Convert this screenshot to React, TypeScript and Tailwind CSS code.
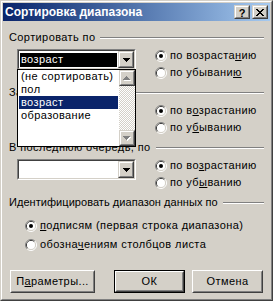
import React from "react";

const F = "font-['Liberation_Sans',Arial,sans-serif] tracking-[0.4px]";

function Raised({ className = "", children }: { className?: string; children?: React.ReactNode }) {
  return (
    <div className={`border border-t-[#d4d0c8] border-l-[#d4d0c8] border-r-[#404040] border-b-[#404040] ${className}`}>
      <div className="w-full h-full border border-t-white border-l-white border-r-[#808080] border-b-[#808080] bg-[#d4d0c8] flex items-center justify-center">
        {children}
      </div>
    </div>
  );
}

function PushButton({ className = "", children, def = false }: { className?: string; children?: React.ReactNode; def?: boolean }) {
  const inner = (
    <div className="w-full h-full border border-t-white border-l-white border-r-[#404040] border-b-[#404040]">
      <div className="w-full h-full border border-t-[#d4d0c8] border-l-[#d4d0c8] border-r-[#808080] border-b-[#808080] bg-[#d4d0c8] flex items-center justify-center text-[11px] leading-[13px] text-black">
        {children}
      </div>
    </div>
  );
  if (def) return <div className={`border border-black ${className}`}>{inner}</div>;
  return <div className={className}>{inner}</div>;
}

function DownTri({ color = "#000" }: { color?: string }) {
  return (
    <svg width="7" height="4" viewBox="0 0 7 4" shapeRendering="crispEdges">
      <rect x="0" y="0" width="7" height="1" fill={color} />
      <rect x="1" y="1" width="5" height="1" fill={color} />
      <rect x="2" y="2" width="3" height="1" fill={color} />
      <rect x="3" y="3" width="1" height="1" fill={color} />
    </svg>
  );
}

function GrayArrow({ up }: { up: boolean }) {
  const rows = up ? [1, 3, 5, 7] : [7, 5, 3, 1];
  return (
    <svg width="8" height="5" viewBox="0 0 8 5" shapeRendering="crispEdges">
      {rows.map((w, i) => (
        <rect key={"w" + i} x={(7 - w) / 2 + 1} y={i + 1} width={w} height="1" fill="#fff" />
      ))}
      {rows.map((w, i) => (
        <rect key={"g" + i} x={(7 - w) / 2} y={i} width={w} height="1" fill="#808080" />
      ))}
    </svg>
  );
}

function Radio({ checked = false, children, className = "" }: { checked?: boolean; children?: React.ReactNode; className?: string }) {
  return (
    <div className={`flex items-center h-[13px] ${className}`}>
      <svg width="12" height="12" viewBox="0 0 12 12" className="shrink-0">
        <path d="M2.11 9.89 A5.5 5.5 0 0 1 9.89 2.11" fill="none" stroke="#808080" strokeWidth="1" />
        <path d="M9.89 2.11 A5.5 5.5 0 0 1 2.11 9.89" fill="none" stroke="#ffffff" strokeWidth="1" />
        <path d="M2.82 9.18 A4.5 4.5 0 0 1 9.18 2.82" fill="none" stroke="#404040" strokeWidth="1" />
        <path d="M9.18 2.82 A4.5 4.5 0 0 1 2.82 9.18" fill="none" stroke="#d4d0c8" strokeWidth="1" />
        <circle cx="6" cy="6" r="4" fill="#fff" />
        {checked && <circle cx="6" cy="6" r="2" fill="#000" />}
      </svg>
      <span className="ml-[3px] text-[11px] leading-[13px] text-black whitespace-nowrap">{children}</span>
    </div>
  );
}

function GroupLabel({ children, className = "", textClass = "" }: { children?: React.ReactNode; className?: string; textClass?: string }) {
  return (
    <div className={`flex items-center h-[13px] ml-[6px] mr-[6px] ${className}`}>
      <span className={`text-[11px] leading-[13px] text-black whitespace-nowrap ${textClass}`}>{children}</span>
      <div className="flex-1 ml-[5px] h-0 border-t border-b border-t-[#808080] border-b-white" />
    </div>
  );
}

function Combo({ value, selected = false, open = false }: { value?: string; selected?: boolean; open?: boolean }) {
  const items = ["(не сортировать)", "пол", "возраст", "образование"];
  return (
    <div className="relative w-[119px] h-[21px]">
      <div className="w-full h-full border border-t-[#808080] border-l-[#808080] border-r-white border-b-white">
        <div className="w-full h-full border border-t-[#404040] border-l-[#404040] border-r-[#d4d0c8] border-b-[#d4d0c8] bg-white flex">
          <div className="flex-1 flex items-center pl-[1px] pr-[1px]">
            {value && (
              <div className={`w-full h-[14px] flex items-center pl-[1px] text-[11px] leading-[13px] ${selected ? "bg-black text-white" : "text-black"}`}>
                {value}
              </div>
            )}
          </div>
          <Raised className="w-[16px] h-full">
            <DownTri />
          </Raised>
        </div>
      </div>
      {open && (
        <div className="absolute left-0 top-[20px] w-[119px] h-[78px] border border-black bg-white flex z-10">
          <div className="flex-1 flex flex-col pt-0">
            {items.map((it) => (
              <div
                key={it}
                className={`h-[13px] pl-[2px] mx-[1px] text-[11px] leading-[13px] whitespace-nowrap ${it === "возраст" ? "bg-[#0a246a] text-white" : "text-black"}`}
              >
                {it}
              </div>
            ))}
          </div>
          <div className="w-[16px] flex flex-col">
            <Raised className="w-[16px] h-[16px]">
              <GrayArrow up />
            </Raised>
            <div className="flex-1 bg-[repeating-conic-gradient(#ffffff_0_25%,#d4d0c8_0_50%)] bg-size-[2px_2px]" />
            <Raised className="w-[16px] h-[16px]">
              <GrayArrow up={false} />
            </Raised>
          </div>
        </div>
      )}
    </div>
  );
}

function SortGroup({
  label,
  asc,
  desc,
  value,
  selected,
  open,
  className = "",
}: {
  label: React.ReactNode;
  asc: React.ReactNode;
  desc: React.ReactNode;
  value?: string;
  selected?: boolean;
  open?: boolean;
  className?: string;
}) {
  return (
    <div className={className}>
      <GroupLabel>{label}</GroupLabel>
      <div className={`flex mt-[5px] ml-[14px] ${open ? "relative z-10" : ""}`}>
        <Combo value={value} selected={selected} open={open} />
        <div className="ml-[19px] flex flex-col gap-[4px]">
          <Radio checked>{asc}</Radio>
          <Radio>{desc}</Radio>
        </div>
      </div>
    </div>
  );
}

function CloseGlyph() {
  const rows = [
    [0, 1, 6, 7],
    [1, 2, 5, 6],
    [2, 3, 4, 5],
    [3, 4],
    [2, 3, 4, 5],
    [1, 2, 5, 6],
    [0, 1, 6, 7],
  ];
  return (
    <svg width="8" height="7" viewBox="0 0 8 7" shapeRendering="crispEdges">
      {rows.map((r, y) => r.map((x) => <rect key={`${x}-${y}`} x={x} y={y} width="1" height="1" fill="#000" />))}
    </svg>
  );
}

export default function App() {
  return (
    <div className={`w-[273px] h-[301px] ${F}`}>
      <div className="w-full h-full border border-t-[#d4d0c8] border-l-[#d4d0c8] border-r-[#404040] border-b-[#404040]">
        <div className="w-full h-full border border-t-white border-l-white border-r-[#808080] border-b-[#808080] bg-[#d4d0c8] p-px flex flex-col">
          {/* Title bar */}
          <div className="h-[18px] bg-linear-to-r from-[#0a246a] to-[#a6caf0] flex items-center pl-[2px] pr-[2px] shrink-0">
            <span className="text-white font-bold text-[12px] leading-[14px] whitespace-nowrap tracking-normal">Сортировка диапазона</span>
            <div className="flex-1" />
            <Raised className="w-[16px] h-[14px]">
              <span className="text-black font-bold text-[11px] leading-[10px] mt-[1px] tracking-normal">?</span>
            </Raised>
            <Raised className="w-[16px] h-[14px] ml-[2px]">
              <CloseGlyph />
            </Raised>
          </div>

          {/* Body */}
          <div className="flex flex-col">
            <SortGroup
              className="mt-[10px] relative z-10"
              label="Сортировать по"
              value="возраст"
              selected
              open
              asc={<>по возраста<u>н</u>ию</>}
              desc={<>по убывани<u>ю</u></>}
            />
            <SortGroup
              className="mt-[7px]"
              label="Затем по"
              asc={<>по в<u>о</u>зрастанию</>}
              desc={<>по у<u>б</u>ыванию</>}
            />
            <SortGroup
              className="mt-[7px]"
              label="В последнюю очередь, по"
              asc={<>по во<u>з</u>растанию</>}
              desc={<>по уб<u>ы</u>ванию</>}
            />

            <GroupLabel className="mt-[7px]" textClass="tracking-[0.05px]">
              Идентифицировать диапазон данных по
            </GroupLabel>
            <Radio checked className="mt-[10px] ml-[22px]">
              <u>п</u>одписям (первая строка диапазона)
            </Radio>
            <Radio className="mt-[6px] ml-[22px]">
              обозна<u>ч</u>ениям столбцов листа
            </Radio>

            <div className="flex mt-[19px] ml-[7px]">
              <PushButton className="w-[85px] h-[23px]">
                П<u>а</u>раметры...
              </PushButton>
              <PushButton def className="w-[71px] h-[23px] ml-[19px]">
                ОК
              </PushButton>
              <PushButton className="w-[71px] h-[23px] ml-[7px]">Отмена</PushButton>
            </div>
          </div>
        </div>
      </div>
    </div>
  );
}
